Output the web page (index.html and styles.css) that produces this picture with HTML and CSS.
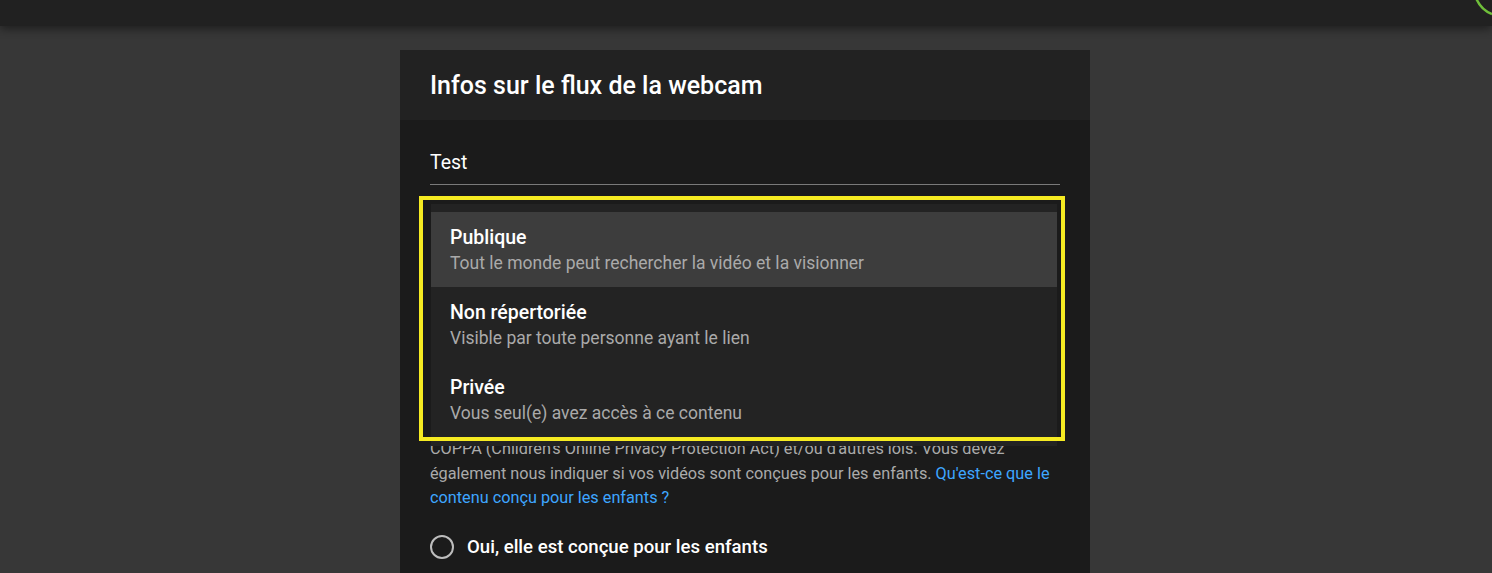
FILE: index.html
```html
<html>
  <head>
    <meta charset="utf-8">
    <title>Infos sur le flux de la webcam</title>
    <link rel="stylesheet" href="styles.css">
  </head>
  <body>
    <div class="topbar">
      <svg class="topbar_avatar" width="20" height="16" viewBox="0 0 20 16">
        <path d="M4 -2 Q9 10 20 14" fill="none" stroke="#6fbf3a" stroke-width="2.5"/>
      </svg>
    </div>

    <div class="page">
      <div class="dialog">
        <div class="dialog_header">
          <h1 class="dialog_title">Infos sur le flux de la webcam</h1>
        </div>

        <div class="dialog_body">
          <div class="title_field">Test</div>

          <div class="visibility_area">
            <ul class="visibility_menu">
              <li class="visibility_item visibility_item_active">
                <div class="visibility_name">Publique</div>
                <div class="visibility_desc">Tout le monde peut rechercher la vidéo et la visionner</div>
              </li>
              <li class="visibility_item">
                <div class="visibility_name">Non répertoriée</div>
                <div class="visibility_desc">Visible par toute personne ayant le lien</div>
              </li>
              <li class="visibility_item">
                <div class="visibility_name">Privée</div>
                <div class="visibility_desc">Vous seul(e) avez accès à ce contenu</div>
              </li>
            </ul>
            <!-- highlight box drawn over the open visibility menu -->
            <div class="highlight_box"></div>
          </div>

          <p class="audience_text">
            COPPA (Children's Online Privacy Protection Act) et/ou d'autres lois. Vous devez<br>
            également nous indiquer si vos vidéos sont conçues pour les enfants. <a href="#" class="audience_link">Qu'est-ce que le<br>
            contenu conçu pour les enfants ?</a>
          </p>

          <label class="radio_row">
            <span class="radio_circle"></span>
            <span class="radio_label">Oui, elle est conçue pour les enfants</span>
          </label>
        </div>
      </div>
    </div>
  </body>
</html>
```

FILE: styles.css
```css
body
  {
  margin: 0;
  background: #373737;
  font-family: Roboto, "Liberation Sans", sans-serif;
  height: 573px;
  overflow: hidden;
  }

.topbar
  {
  position: relative;
  height: 26px;
  background: #212121;
  box-shadow: 0 3px 10px rgba(0, 0, 0, 0.45);
  }

.topbar_avatar
  {
  position: absolute;
  right: 0;
  top: 0;
  }

.page
  {
  display: flex;
  justify-content: center;
  padding-top: 24px;
  padding-right: 2px;
  }

.dialog
  {
  width: 690px;
  min-height: 620px;
  background: #1b1b1b;
  }

.dialog_header
  {
  height: 70px;
  display: flex;
  align-items: center;
  padding: 0 30px;
  background: #222222;
  }

.dialog_title
  {
  margin: 0;
  font-size: 25px;
  font-weight: 500;
  color: #ffffff;
  }

.dialog_body
  {
  padding: 0 30px;
  }

.title_field
  {
  padding: 30px 0 8px 0;
  font-size: 19.5px;
  line-height: 26px;
  color: #ffffff;
  border-bottom: 1px solid #7a7a7a;
  }

.visibility_area
  {
  position: relative;
  z-index: 1;
  margin: 19px 0 -9px 1px;
  width: 626px;
  }

.visibility_menu
  {
  list-style: none;
  margin: 0;
  padding: 8px 0 9px 0;
  background: #232323;
  }

.highlight_box
  {
  position: absolute;
  left: -12px;
  top: -8px;
  width: 646px;
  height: 245px;
  box-sizing: border-box;
  border: 4px solid #f6eb22;
  pointer-events: none;
  }

.visibility_item
  {
  height: 75px;
  box-sizing: border-box;
  padding: 13px 19px 0 19px;
  }

.visibility_item_active
  {
  background: #3d3d3d;
  }

.visibility_name
  {
  font-size: 19.5px;
  line-height: 26px;
  font-weight: 500;
  color: #ffffff;
  }

.visibility_desc
  {
  font-size: 17.5px;
  line-height: 24px;
  color: #aaaaaa;
  }

.audience_text
  {
  margin: 0;
  font-size: 16.25px;
  line-height: 24.5px;
  color: #aaaaaa;
  }

.audience_link
  {
  color: #3ea6ff;
  text-decoration: none;
  }

.radio_row
  {
  display: flex;
  align-items: center;
  gap: 13px;
  margin-top: 24px;
  }

.radio_circle
  {
  width: 20px;
  height: 20px;
  border: 2px solid #bdbdbd;
  border-radius: 50%;
  }

.radio_label
  {
  font-size: 18.6px;
  font-weight: 500;
  color: #ffffff;
  }
```
